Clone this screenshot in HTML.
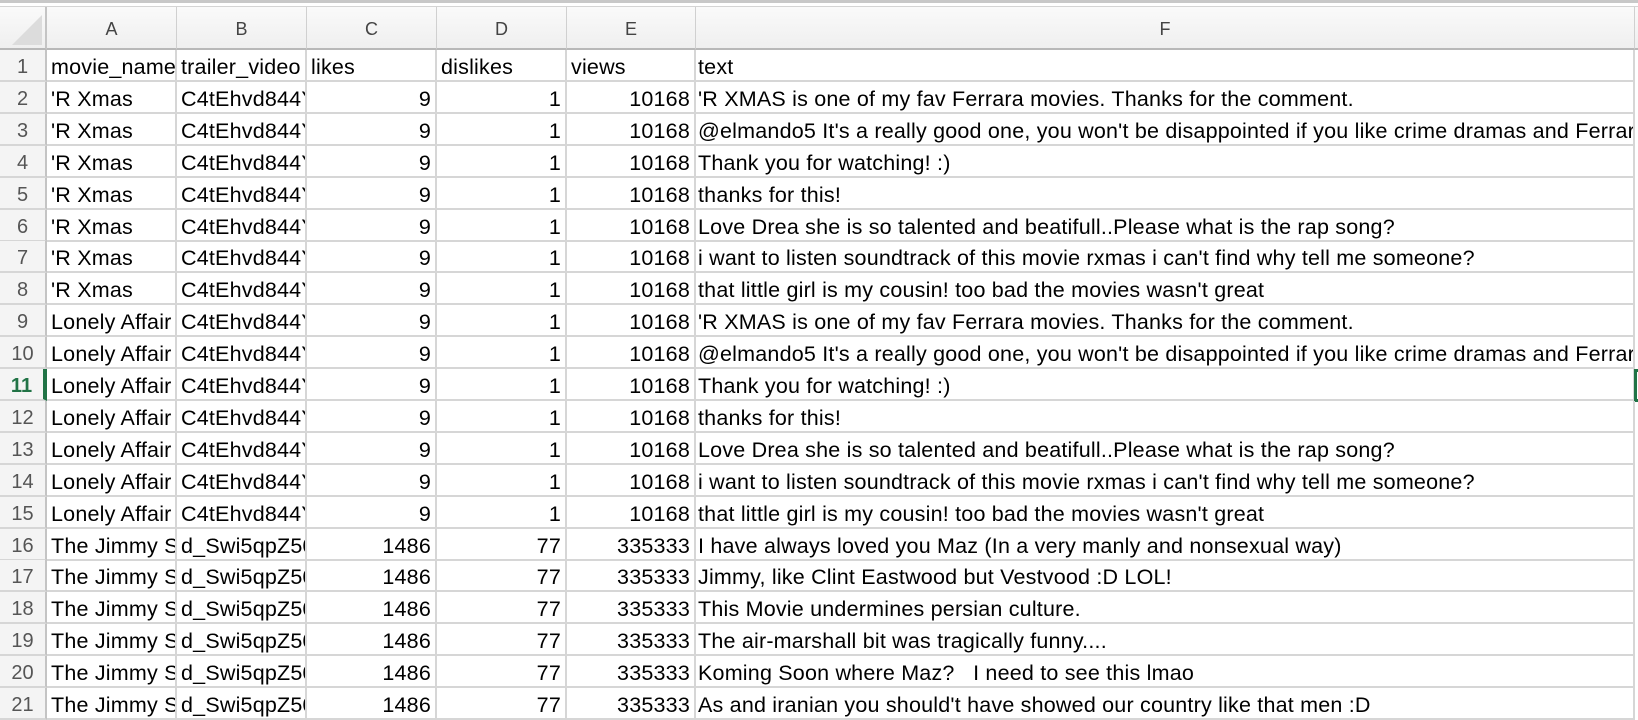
<!DOCTYPE html>
<html><head><meta charset="utf-8"><style>
*{margin:0;padding:0;box-sizing:border-box}
body{width:1638px;height:716px;overflow:hidden;background:#fff;font-family:"Liberation Sans",sans-serif;position:relative}
.top{position:absolute;left:0;top:0;width:1638px;height:7px;background:#fff;border-top:3px solid #c8c8c8;border-bottom:1px solid #d4d4d4}
.hdr{position:absolute;top:7px;height:43px;background:linear-gradient(#fafafa,#efefef);border-bottom:2px solid #b8b8b8;border-right:1px solid #d0d0d0;color:#444;font-size:18px;text-align:center;line-height:45px}
.c{position:absolute;height:32px;border-bottom:2px solid #d6d6d6;border-right:2px solid #d6d6d6;font-size:21.5px;line-height:34px;letter-spacing:0.2px;white-space:nowrap;overflow:hidden;color:#000;padding:0 4px}
.rn{background:#f4f4f4;color:#555;text-align:center;font-size:20px;border-right:2px solid #c4c4c4;letter-spacing:0}
.r{text-align:right}
</style></head><body>
<div class="top"></div>
<div class="hdr" style="left:0;width:47px;border-right:2px solid #c4c4c4"><svg width="47" height="43" style="position:absolute;left:0;top:0"><polygon points="12,38 42,38 42,8" fill="#dcdcdc"/></svg></div>
<div class="hdr" style="left:47px;width:130px">A</div>
<div class="hdr" style="left:177px;width:130px">B</div>
<div class="hdr" style="left:307px;width:130px">C</div>
<div class="hdr" style="left:437px;width:130px">D</div>
<div class="hdr" style="left:567px;width:129px">E</div>
<div class="hdr" style="left:696px;width:939px">F</div>
<div class="hdr" style="left:1635px;width:3px;border-right:0"></div>
<div id="g"></div>
<script>
var rows=[["movie_name","trailer_video","likes","dislikes","views","text"]];
var t1=["'R XMAS is one of my fav Ferrara movies. Thanks for the comment.","@elmando5 It's a really good one, you won't be disappointed if you like crime dramas and Ferrara","Thank you for watching! :)","thanks for this!","Love Drea she is so talented and beatifull..Please what is the rap song?","i want to listen soundtrack of this movie rxmas i can't find why tell me someone?","that little girl is my cousin! too bad the movies wasn't great"];
t1.forEach(function(t){rows.push(["'R Xmas","C4tEhvd844Y","9","1","10168",t])});
t1.forEach(function(t){rows.push(["Lonely Affair","C4tEhvd844Y","9","1","10168",t])});
["I have always loved you Maz (In a very manly and nonsexual way)","Jimmy, like Clint Eastwood but Vestvood :D LOL!","This Movie undermines persian culture.","The air-marshall bit was tragically funny....","Koming Soon where Maz?&nbsp;&nbsp; I need to see this lmao","As and iranian you should't have showed our country like that men :D"].forEach(function(t){rows.push(["The Jimmy Show","d_Swi5qpZ50","1486","77","335333",t])});
var L=[0,47,177,307,437,567,696,1635],h="";
rows.forEach(function(r,i){
 var y=(50+i*31.9).toFixed(1);
 var sel=i==10;
 h+='<div class="c rn" style="left:0;top:'+y+'px;width:47px;'+(sel?'color:#217346;font-weight:bold;border-right:4px solid #217346;':'')+'">'+(i+1)+'</div>';
 for(var j=0;j<6;j++){
  var num=i>0&&j>=2&&j<=4;
  h+='<div class="c'+(num?' r':'')+'" style="left:'+L[j+1]+'px;top:'+y+'px;width:'+(L[j+2]-L[j+1])+'px;'+(j==5?'padding-left:2px;':'')+'">'+r[j]+'</div>';
 }
 if(sel)h+='<div style="position:absolute;left:1634px;top:'+y+'px;width:4px;height:33px;border:3px solid #217346;border-right:0"></div>';
});
document.getElementById('g').innerHTML=h;
</script>
</body></html>
